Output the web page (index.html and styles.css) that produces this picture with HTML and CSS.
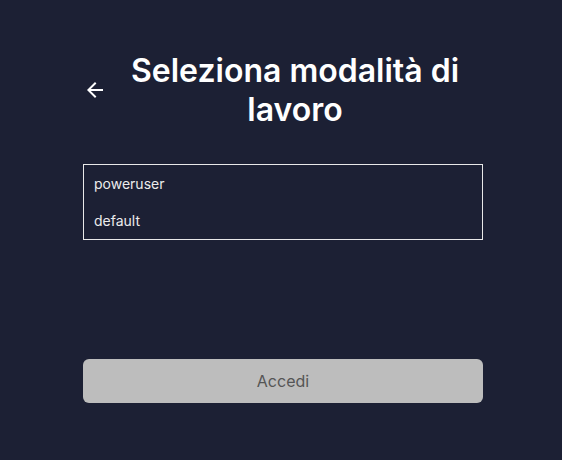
FILE: index.html
```html
<!DOCTYPE html>
<html lang="it">
<head>
<meta charset="utf-8">
<link rel="stylesheet" href="styles.css">
</head>
<body>
<main class="page">
  <header class="header">
    <button class="back" aria-label="Indietro">
      <svg width="24" height="24" viewBox="0 0 24 24"><path d="M20 11H7.83l5.59-5.59L12 4l-8 8 8 8 1.41-1.41L7.83 13H20v-2z" fill="#ffffff"/></svg>
    </button>
    <h1 class="title">Seleziona modalità di lavoro</h1>
  </header>
  <ul class="list">
    <li class="item">poweruser</li>
    <li class="item">default</li>
  </ul>
  <button class="submit" disabled>Accedi</button>
</main>
</body>
</html>
```
FILE: styles.css
```css
html, body {
  margin: 0;
  padding: 0;
  background: #1c2034;
  height: 100%;
}
body {
  font-family: Inter, "Noto Sans", sans-serif;
  color: #ffffff;
}
.page {
  width: 400px;
  margin-left: 83px;
  padding-top: 51px;
  display: flex;
  flex-direction: column;
}
.header {
  display: flex;
  align-items: center;
}
.back {
  width: 24px;
  height: 24px;
  padding: 0;
  border: 0;
  background: none;
  display: flex;
  flex: none;
}
.title {
  flex: 1;
  margin: 0;
  text-align: center;
  font-size: 32px;
  font-weight: 600;
  line-height: 39px;
}
.list {
  list-style: none;
  margin: 35px 0 0;
  padding: 0;
  border: 1px solid #e8e8e8;
}
.item {
  height: 37px;
  line-height: 37px;
  padding-left: 10px;
  font-size: 14px;
  color: #ececec;
}
.submit {
  margin-top: 119px;
  height: 44px;
  border: 0;
  border-radius: 6px;
  background: #bdbdbd;
  color: #555555;
  font-family: Inter, "Noto Sans", sans-serif;
  font-size: 16px;
}
```
